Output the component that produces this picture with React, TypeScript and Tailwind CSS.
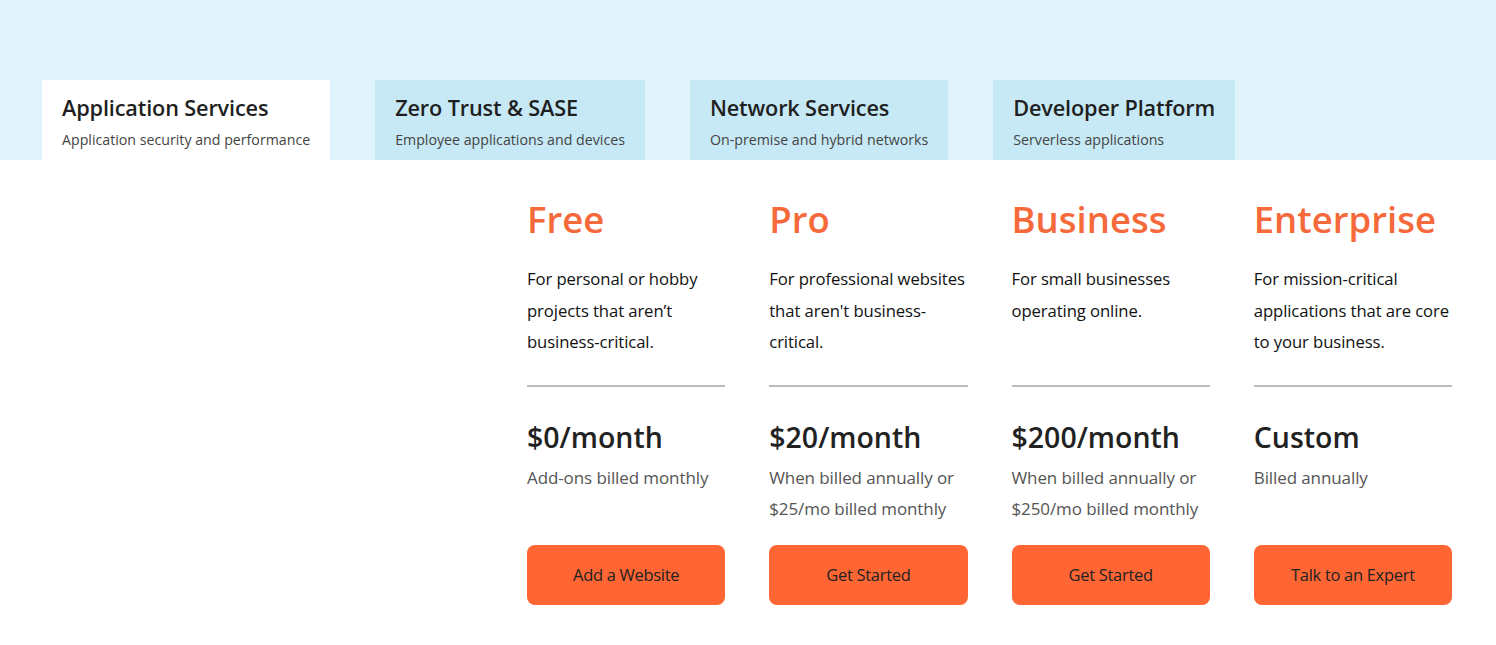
import React from 'react';

const tabs = [
  { title: 'Application Services', sub: 'Application security and performance', active: true },
  { title: 'Zero Trust & SASE', sub: 'Employee applications and devices' },
  { title: 'Network Services', sub: 'On-premise and hybrid networks' },
  { title: 'Developer Platform', sub: 'Serverless applications' },
];

const plans = [
  {
    name: 'Free',
    desc: 'For personal or hobby projects that aren’t business-critical.',
    price: '$0/month',
    note: ['Add-ons billed monthly'],
    cta: 'Add a Website',
  },
  {
    name: 'Pro',
    desc: "For professional websites that aren't business-critical.",
    price: '$20/month',
    note: ['When billed annually or', '$25/mo billed monthly'],
    cta: 'Get Started',
  },
  {
    name: 'Business',
    desc: 'For small businesses operating online.',
    price: '$200/month',
    note: ['When billed annually or', '$250/mo billed monthly'],
    cta: 'Get Started',
  },
  {
    name: 'Enterprise',
    desc: 'For mission-critical applications that are core to your business.',
    price: 'Custom',
    note: ['Billed annually'],
    cta: 'Talk to an Expert',
  },
];

export default function App() {
  return (
    <div className="min-h-[645px] bg-white text-[#222]" style={{ fontFamily: '"Open Sans", "Noto Sans", sans-serif' }}>
      <div className="flex gap-[45px] bg-[#e1f3fa] px-[42px] pt-[80px]">
        {tabs.map((t) => (
          <div key={t.title} className={`h-[80px] px-5 pt-[13px] ${t.active ? 'bg-white' : 'bg-[#c6e9f5]'}`}>
            <div className="text-[21.7px] leading-[30px] font-semibold text-[#1f1f1f] tracking-[-0.15px]">{t.title}</div>
            <div className="mt-[7px] text-[14.2px] leading-5 text-[#444]">{t.sub}</div>
          </div>
        ))}
      </div>

      <div className="ml-[527px] grid w-[925px] grid-cols-4 gap-x-[44px] pt-[34px]">
        {plans.map((p) => (
          <div key={p.name} className="flex flex-col">
            <h2 className="text-[36.5px] leading-[50px] font-semibold text-[#f6693a]">{p.name}</h2>
            <p className="mt-[19px] h-[100px] text-[16.7px] leading-[31.5px] text-[#111] tracking-[-0.1px]">{p.desc}</p>
            <div className="mt-[22px] h-[2px] bg-[#bbb]" />
            <div className="mt-[30px] text-[28.5px] leading-[40px] font-semibold text-[#222]">{p.price}</div>
            <div className="mt-[5px] h-[80px] text-[17px] leading-[31px] text-[#555] tracking-[-0.1px]">
              {p.note.map((n) => (
                <div key={n}>{n}</div>
              ))}
            </div>
            <button className="mt-[3px] h-[60px] rounded-lg bg-[#ff6633] text-[16.5px] text-[#222] tracking-[-0.3px]">{p.cta}</button>
          </div>
        ))}
      </div>
    </div>
  );
}
